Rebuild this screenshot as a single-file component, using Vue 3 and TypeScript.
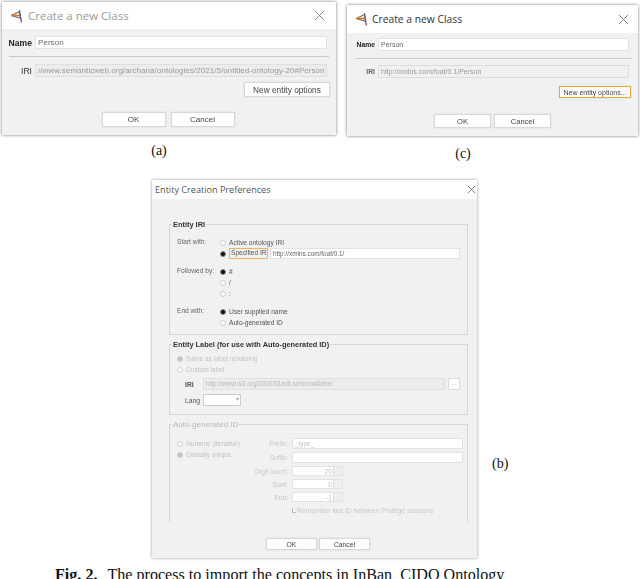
<script setup lang="ts">
const closePath = 'M1 1L10 10M10 1L1 10'
</script>

<template>
  <div class="page">
    <figure class="panel panel-a">
      <section class="dlg dlg-a">
        <header class="bar bar-a">
          <svg class="logo" viewBox="0 0 14 14"><path d="M1 6.5L9.5 2.5L11 9.5Z" fill="#f3e3d4" stroke="#6f5a52" stroke-width="1"/><path d="M1 6.5H10" stroke="#d4762c" stroke-width="1.4"/><path d="M9.5 1L10.5 9" stroke="#55606e" stroke-width="1.1" fill="none"/><path d="M10.5 9L11.5 13.5" stroke="#7b55a8" stroke-width="1.3" fill="none"/></svg>
          <span class="title title-a">Create a new Class</span>
          <svg class="x x-a" viewBox="0 0 11 11"><path :d="closePath"/></svg>
        </header>
        <div class="body body-a">
          <div class="row"><label class="lbl lbl-a strong">Name</label><div class="inp">Person</div></div>
          <hr class="sep" />
          <div class="row"><label class="lbl lbl-a">IRI</label><div class="inp off">//www.semanticweb.org/archana/ontologies/2021/5/untitled-ontology-20#Person</div></div>
          <div class="right"><button class="btn opt-a">New entity options</button></div>
          <div class="actions actions-a"><button class="btn ok-a">OK</button><button class="btn ok-a">Cancel</button></div>
        </div>
      </section>
      <figcaption class="cap cap-a">(a)</figcaption>
    </figure>

    <figure class="panel panel-c">
      <section class="dlg dlg-c">
        <header class="bar bar-c">
          <svg class="logo" viewBox="0 0 14 14"><path d="M1 6.5L9.5 2.5L11 9.5Z" fill="#f3e3d4" stroke="#6f5a52" stroke-width="1"/><path d="M1 6.5H10" stroke="#d4762c" stroke-width="1.4"/><path d="M9.5 1L10.5 9" stroke="#55606e" stroke-width="1.1" fill="none"/><path d="M10.5 9L11.5 13.5" stroke="#7b55a8" stroke-width="1.3" fill="none"/></svg>
          <span class="title title-c">Create a new Class</span>
          <svg class="x x-c" viewBox="0 0 11 11"><path :d="closePath"/></svg>
        </header>
        <div class="body body-c">
          <div class="row"><label class="lbl lbl-c strong">Name</label><div class="inp">Person</div></div>
          <hr class="sep" />
          <div class="row"><label class="lbl lbl-c strong dim">IRI</label><div class="inp off outline">http://xmlns.com/foaf/0.1/Person</div></div>
          <div class="right"><button class="btn opt-c">New entity options...</button></div>
          <div class="actions actions-c"><button class="btn ok-c">OK</button><button class="btn ok-c">Cancel</button></div>
        </div>
      </section>
      <figcaption class="cap cap-c">(c)</figcaption>
    </figure>

    <section class="dlg dlg-b">
      <header class="bar bar-b">
        <span class="title title-b">Entity Creation Preferences</span>
        <svg class="x x-b" viewBox="0 0 11 11"><path :d="closePath"/></svg>
      </header>
      <div class="body body-b">
        <fieldset class="group g1">
          <legend>Entity IRI</legend>
          <div class="opts">
            <span class="k">Start with:</span>
            <div class="col">
              <div class="opt"><i class="radio"></i>Active ontology IRI</div>
              <div class="opt"><i class="radio on"></i><span class="focus">Specified IRI</span><div class="inp spec">http://xmlns.com/foaf/0.1/</div></div>
            </div>
            <span class="k">Followed by:</span>
            <div class="col">
              <div class="opt"><i class="radio on"></i>#</div>
              <div class="opt"><i class="radio"></i>/</div>
              <div class="opt"><i class="radio"></i>:</div>
            </div>
            <span class="k">End with:</span>
            <div class="col">
              <div class="opt"><i class="radio on"></i>User supplied name</div>
              <div class="opt"><i class="radio"></i>Auto-generated ID</div>
            </div>
          </div>
        </fieldset>

        <fieldset class="group g2">
          <legend>Entity Label (for use with Auto-generated ID)</legend>
          <div class="opt faint first"><i class="radio dis on"></i>Same as label rendering</div>
          <div class="opt faint"><i class="radio dis"></i>Custom label</div>
          <div class="iri-row"><span class="mini">IRI</span><div class="inp off iri-inp">http://www.w3.org/2000/01/rdf-schema#label</div><div class="dots">...</div></div>
          <div class="lang-row"><span class="mini">Lang</span><div class="lang"><b>▾</b></div></div>
        </fieldset>

        <fieldset class="group g3">
          <legend>Auto-generated ID</legend>
          <div class="auto">
            <div class="auto-left">
              <div class="opt faint"><i class="radio dis"></i>Numeric (iterative)</div>
              <div class="opt faint"><i class="radio dis on"></i>Globally unique</div>
            </div>
            <div class="auto-right">
              <span class="k2">Prefix:</span><div class="inp f">_type_</div>
              <span class="k2">Suffix:</span><div class="inp f"></div>
              <span class="k2">Digit count:</span><div class="spin"><span>20</span><b></b></div>
              <span class="k2">Start:</span><div class="spin"><span>0</span><b></b></div>
              <span class="k2">End:</span><div class="spin"><span>-1</span><b></b></div>
              <span></span><div class="check"><i></i>Remember last ID between Protégé sessions</div>
            </div>
          </div>
        </fieldset>
        <div class="actions actions-b"><button class="btn ok-b">OK</button><button class="btn ok-b">Cancel</button></div>
      </div>
    </section>

    <div class="cap cap-b">(b)</div>
    <p class="fig"><b>Fig. 2.</b><span class="fig-gap">The process to import the concepts in InBan_CIDO Ontology</span></p>
  </div>
</template>

<style>
html, body { margin: 0; background: #fff; }
</style>

<style scoped>
.page { position: relative; width: 640px; height: 579px; overflow: hidden; background: #fff; font-family: "Liberation Sans", Arial, sans-serif; }
.panel { position: absolute; margin: 0; display: flex; flex-direction: column; align-items: center; }
.panel-a { left: 2px; top: 2px; width: 334px; }
.panel-c { left: 347px; top: 5px; width: 291px; }
.dlg { box-sizing: border-box; background: #f1f1f1; box-shadow: 0 0 3px rgba(0,0,0,.55); display: flex; flex-direction: column; filter: blur(.55px); }
.dlg-a { width: 334px; height: 133px; }
.dlg-c { width: 291px; height: 131px; }
.dlg-b { position: absolute; left: 152px; top: 180px; width: 325px; height: 378px; box-shadow: 0 0 3px rgba(0,0,0,.4); }
.bar { background: #fff; display: flex; align-items: center; flex: none; }
.bar-a { height: 27px; padding-left: 8px; }
.bar-c { height: 28px; padding-left: 8px; }
.bar-b { height: 19px; padding-left: 3px; }
.logo { width: 14px; height: 14px; margin-right: 4px; flex: none; }
.bar-c .logo { margin-right: 3px; }
.title { font-family: "Open Sans", "Liberation Sans", sans-serif; white-space: nowrap; }
.title-a { font-size: 11.5px; color: #9a9a9a; }
.title-c { font-size: 10.3px; color: #333; }
.title-b { font-size: 9.1px; color: #555; }
.x { width: 11px; height: 11px; margin-left: auto; fill: none; stroke: #777; stroke-width: .9; flex: none; }
.x-a { margin-right: 11px; }
.x-c { margin-right: 9px; }
.x-b { width: 9px; height: 9px; margin-right: 1px; stroke: #555; }
.body { display: flex; flex-direction: column; position: relative; flex: 1; }
.body-a { padding: 7px 9px 0 6px; }
.body-c { padding: 5px 9px 0 8px; }
.row { display: flex; align-items: center; }
.lbl { text-align: right; color: #333; flex: none; margin-right: 3px; }
.lbl-a { width: 24px; font-size: 8.6px; }
.lbl-c { width: 20px; font-size: 6.8px; }
.strong { font-weight: 700; color: #222; }
.dim { color: #666; }
.inp { box-sizing: border-box; flex: 1; min-width: 0; height: 13px; line-height: 11px; background: #fff; border: 1px solid #e2e2e2; padding-left: 2px; color: #666; font-size: 7px; white-space: nowrap; overflow: hidden; }
.body-a .inp { font-size: 8px; letter-spacing: .05px; }
.off { background: #ececec; color: #9a9a9a; border-color: #e0e0e0; }
.outline { border-color: #ddd; background: #f0f0f0; }
.sep { margin: 7px 0; border: 0; border-top: 1px solid #c8c8c8; box-sizing: border-box; }
.body-a .sep { width: 320px; margin: 7px 0 7px 1px; }
.body-c .sep { width: 276px; margin: 7px 0 6px 1px; }
.right { display: flex; justify-content: flex-end; }
.btn { box-sizing: border-box; background: #fff; border: 1px solid #d8d8d8; box-shadow: 0 0 1px rgba(0,0,0,.2); color: #444; font: 7.5px "Liberation Sans", Arial, sans-serif; padding: 0; }
.opt-a { width: 86px; height: 15px; margin: 5px -3px 0 0; font-size: 8.3px; }
.opt-c { width: 72px; height: 12px; margin: 8px -2px 0 0; border-color: #f0a63c; font-size: 7px; }
.actions { display: flex; justify-content: center; }
.actions-a { gap: 5px; margin: 15px 0 0 1px; }
.ok-a { width: 64px; height: 15px; font-size: 8px; }
.actions-c { gap: 3px; margin: 16px 0 0 1px; }
.ok-c { width: 57px; height: 14px; }
.actions-b { gap: 2px; position: absolute; left: 114px; top: 339px; }
.ok-b { width: 51px; height: 12px; font-size: 6.8px; }
.cap { font-family: "Liberation Serif", "Times New Roman", serif; font-size: 14px; color: #111; }
.cap-a { margin: 8px 0 0 -20px; }
.cap-c { margin: 10px 0 0 -59px; }
.cap-b { position: absolute; left: 492px; top: 456px; }
.body-b { padding: 0 9px 0 17px; font-size: 6.6px; color: #555; }
.group { box-sizing: border-box; border: 1px solid #d6d6d6; margin: 0; padding: 0; min-width: 0; }
.group legend { font-size: 7.4px; font-weight: 700; color: #333; padding: 0 1px; margin-left: 2px; white-space: nowrap; line-height: 9px; }
.g1 { height: 115px; margin-top: 21px; }
.g2 { height: 75px; margin-top: 5px; }
.g3 { height: 102px; margin-top: 5px; border-bottom: 0; color: #c2c2c2; }
.g3 legend { font-weight: 400; color: #b8b8b8; font-size: 8px; }
.opts { display: grid; grid-template-columns: 43px 1fr; row-gap: 6px; padding: 7px 7px 0 7px; }
.k { color: #666; line-height: 12px; }
.col { display: flex; flex-direction: column; }
.opt { display: flex; align-items: center; height: 11px; color: #555; white-space: nowrap; }
.col .opt:first-child { margin-top: 1px; }
.faint { color: #c2c2c2; margin-left: 7px; }
.first { margin-top: 4px; }
.radio { width: 4px; height: 4px; border: 1px solid #ccc; border-radius: 50%; margin-right: 3px; flex: none; background: #fff; }
.radio.on { background: #111; border-color: #888; }
.radio.dis.on { background: #c6c6c6; border-color: #ccc; }
.focus { border: 1px solid #eeb35f; padding: 0 1px; line-height: 8px; height: 9px; margin-right: 2px; width: 35px; white-space: nowrap; overflow: hidden; }
.spec { height: 11px; line-height: 9px; font-size: 6.4px; }
.iri-row { display: flex; align-items: center; margin: 3px 0 0 15px; }
.mini { font-size: 6.8px; color: #555; width: 18px; flex: none; font-weight: 700; }
.iri-inp { flex: none; width: 242px; height: 12px; line-height: 10px; font-size: 6.4px; color: #b8b8b8; }
.dots { width: 12px; height: 12px; background: #fff; border: 1px solid #ddd; box-sizing: border-box; margin-left: 3px; text-align: center; line-height: 8px; color: #bbb; }
.lang-row { display: flex; align-items: center; margin: 4px 0 0 15px; }
.lang-row .mini { font-weight: 400; }
.lang { width: 38px; height: 12px; box-sizing: border-box; background: #fff; border: 1px solid #ccc; text-align: right; line-height: 9px; font-size: 6px; }
.lang b { color: #aaa; font-weight: 400; padding-right: 1px; }
.auto { display: flex; padding-top: 9px; }
.auto-left { width: 60px; flex: none; }
.auto-right { display: grid; grid-template-columns: 58px 171px; column-gap: 4px; row-gap: 3px; align-items: center; font-size: 6.6px; }
.k2 { text-align: right; white-space: nowrap; color: #c8c8c8; }
.f { height: 11px; line-height: 9px; font-size: 6.4px; color: #c0c0c0; }
.spin { width: 51px; height: 10px; box-sizing: border-box; background: #fff; border: 1px solid #e2e2e2; display: flex; justify-content: flex-end; align-items: center; font-size: 6.6px; color: #c4c4c4; }
.spin b { width: 8px; height: 100%; background: #eee; margin-left: 1px; border-left: 1px solid #ddd; }
.check { display: flex; align-items: center; gap: 1px; margin-top: 2px; white-space: nowrap; font-size: 6.8px; color: #c8c8c8; }
.check i { width: 3px; height: 4px; border-left: 1px solid #bbb; border-bottom: 1px solid #bbb; }
.fig { position: absolute; left: 55px; top: 566px; margin: 0; font: 16.1px "Liberation Serif", "Times New Roman", serif; color: #111; white-space: nowrap; }
.fig-gap { margin-left: 10px; }
</style>
